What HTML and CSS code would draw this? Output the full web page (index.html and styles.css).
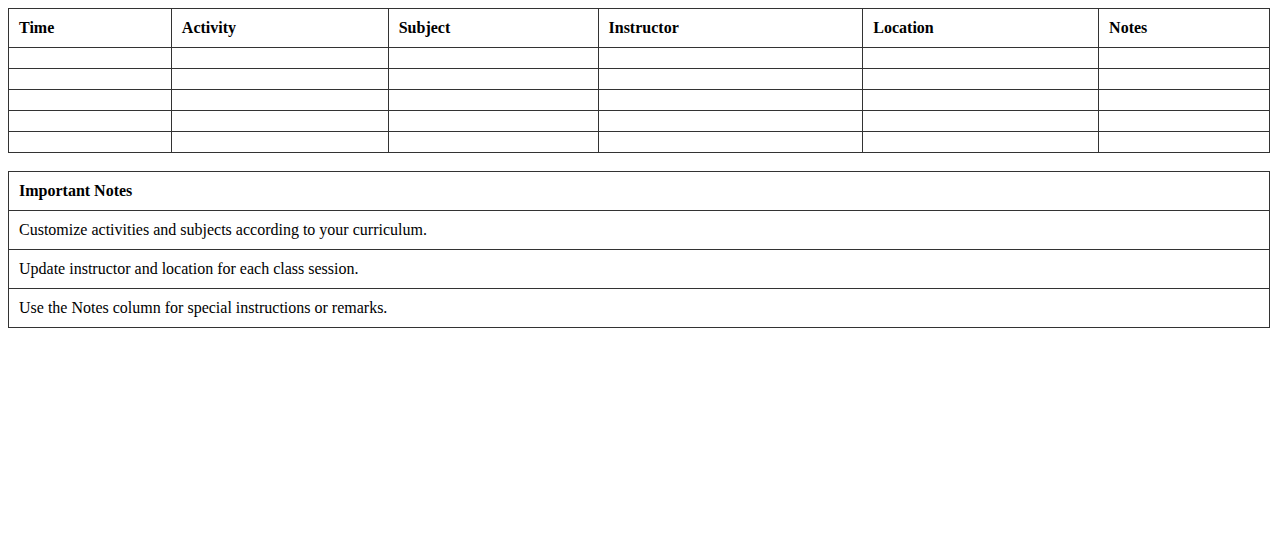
FILE: index.html
```html
<!DOCTYPE html>
<html>
<head>
<meta charset="utf-8">
<link rel="stylesheet" href="styles.css">
</head>
<body>
<table class="schedule">
  <thead>
    <tr>
      <th class="c-time">Time</th>
      <th class="c-activity">Activity</th>
      <th class="c-subject">Subject</th>
      <th class="c-instructor">Instructor</th>
      <th class="c-location">Location</th>
      <th class="c-notes">Notes</th>
    </tr>
  </thead>
  <tbody>
    <tr><td></td><td></td><td></td><td></td><td></td><td></td></tr>
    <tr><td></td><td></td><td></td><td></td><td></td><td></td></tr>
    <tr><td></td><td></td><td></td><td></td><td></td><td></td></tr>
    <tr><td></td><td></td><td></td><td></td><td></td><td></td></tr>
    <tr><td></td><td></td><td></td><td></td><td></td><td></td></tr>
  </tbody>
</table>
<table class="notes">
  <thead>
    <tr><th>Important Notes</th></tr>
  </thead>
  <tbody>
    <tr><td>Customize activities and subjects according to your curriculum.</td></tr>
    <tr><td>Update instructor and location for each class session.</td></tr>
    <tr><td>Use the Notes column for special instructions or remarks.</td></tr>
  </tbody>
</table>
</body>
</html>
```
FILE: styles.css
```css
body {
  margin: 8px;
  font-family: "Liberation Serif", "Times New Roman", serif;
  font-size: 16px;
  color: #000;
  background: #fff;
}
table {
  width: 100%;
  border-collapse: collapse;
}
th, td {
  border: 1px solid #333;
  padding: 10px;
  text-align: left;
}
th {
  font-weight: bold;
}
.c-time { width: 142px; }
.c-activity { width: 196px; }
.c-subject { width: 189px; }
.c-instructor { width: 244px; }
.c-location { width: 215px; }
.c-notes { width: 150px; }
.notes {
  margin-top: 18px;
}
```
